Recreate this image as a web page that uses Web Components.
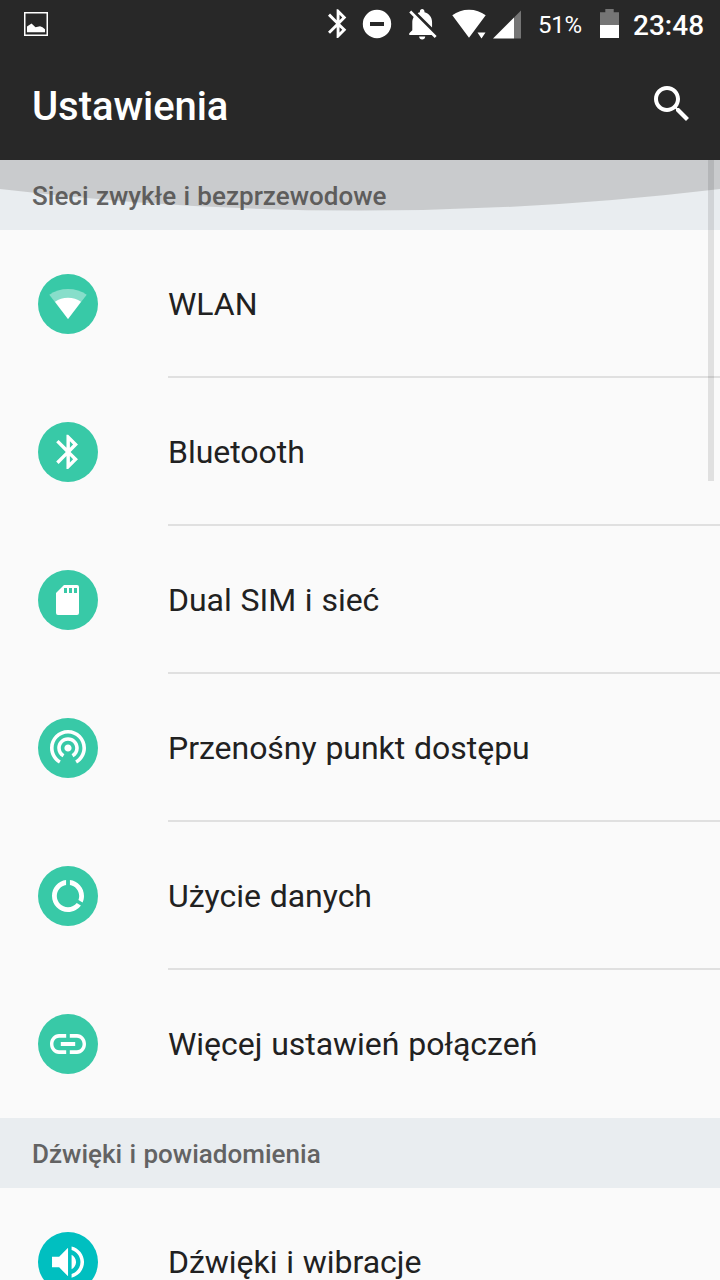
<!DOCTYPE html>
<html lang="pl">
<head>
<meta charset="utf-8">
<title>Ustawienia</title>
<style>
  html, body {
    margin: 0;
    height: 1280px;
    overflow: hidden;
    background: #fafafa;
    font-family: Roboto, "Noto Sans", sans-serif;
  }
</style>
</head>
<body>
<settings-screen>
  <status-bar slot="top" battery="51%" time="23:48"></status-bar>
  <app-bar slot="top">Ustawienia</app-bar>

  <settings-category label="Sieci zwykłe i bezprzewodowe">
    <settings-item icon="wlan">WLAN</settings-item>
    <settings-item icon="bluetooth">Bluetooth</settings-item>
    <settings-item icon="sim">Dual SIM i sieć</settings-item>
    <settings-item icon="hotspot">Przenośny punkt dostępu</settings-item>
    <settings-item icon="data">Użycie danych</settings-item>
    <settings-item icon="link">Więcej ustawień połączeń</settings-item>
  </settings-category>
  <settings-category label="Dźwięki i powiadomienia" style="--accent: #00bfc0">
    <settings-item icon="volume">Dźwięki i wibracje</settings-item>
  </settings-category>
</settings-screen>

<script>
const BLUETOOTH = 'M17.71 7.71L12 2h-1v7.59L6.41 5 5 6.41 10.59 12 5 17.59 6.41 19 11 14.41V22h1l5.71-5.71-4.3-4.29 4.3-4.29zM13 5.83l1.88 1.88L13 9.59V5.83zm1.88 10.46L13 18.17v-3.76l1.88 1.88z';

// Glyphs for the 60x60 round badges
const ICONS = {
  wlan: `
    <path d="M30 45L11.3 20.8C16.5 17 23 15 30 15s13.500 2 18.700 5.800z" opacity=".4"/>
    <path d="M30 45L17 27.800C20.700 25.100 25.200 23.700 30 23.700s9.300 1.400 13 4.100z"/>`,
  bluetooth: `<path transform="translate(9.600 9.300) scale(1.715)" d="${BLUETOOTH}"/>`,
  sim: `<path fill-rule="evenodd" d="M26 15h13a2 2 0 0 1 2 2v26a2 2 0 0 1-2 2H20a2 2 0 0 1-2-2V23zM26 18v5h3v-5zM31 18v5h3v-5zM36 18v5h3v-5z"/>`,
  hotspot: `<path transform="translate(8.4 6.6) scale(1.8)" d="M12 11c-1.100 0-2 .9-2 2s.9 2 2 2 2-.9 2-2-.9-2-2-2zm6 2c0-3.310-2.690-6-6-6s-6 2.690-6 6c0 2.220 1.210 4.150 3 5.190l1-1.740c-1.190-.7-2-1.970-2-3.450 0-2.210 1.790-4 4-4s4 1.790 4 4c0 1.480-.81 2.750-2 3.450l1 1.740c1.790-1.040 3-2.970 3-5.190zM12 3C6.480 3 2 7.480 2 13c0 3.700 2.010 6.920 4.990 8.650l1-1.730C5.610 18.530 4 15.960 4 13c0-4.420 3.580-8 8-8s8 3.580 8 8c0 2.960-1.610 5.530-4 6.920l1 1.730c2.990-1.730 5-4.950 5-8.650 0-5.520-4.480-10-10-10z"/>`,
  data: `<path transform="translate(10.800 10.800) scale(1.6)" d="M13.200 2.050v3.030c3.190.49 5.800 3.390 5.800 6.920 0 .9-.18 1.750-.48 2.540l2.600 1.530c.56-1.240.88-2.620.88-4.070 0-5.180-3.950-9.450-8.800-9.950zM12 19c-3.870 0-7-3.130-7-7 0-3.530 2.610-6.430 5.800-6.920V2.050c-4.860.5-8.800 4.760-8.800 9.950 0 5.520 4.470 10 9.990 10 3.310 0 6.240-1.610 8.060-4.090l-2.600-1.530C16.170 17.980 14.210 19 12 19z"/>`,
  link: `<path transform="translate(8.4 6) scale(1.8 2)" d="M3.900 12c0-1.710 1.390-3.100 3.100-3.100h4V7H7c-2.760 0-5 2.240-5 5s2.240 5 5 5h4v-1.900H7c-1.710 0-3.100-1.390-3.100-3.100zM8 13h8v-2H8v2zm9-6h-4v1.900h4c1.710 0 3.100 1.390 3.100 3.100s-1.390 3.100-3.100 3.100h-4V17h4c2.760 0 5-2.240 5-5s-2.240-5-5-5z"/>`,
  volume: `<path transform="translate(8.700 8.700) scale(1.778)" d="M3 9v6h4l5 5V4L7 9H3zm13.500 3c0-1.770-1.020-3.290-2.500-4.030v8.050c1.480-.73 2.500-2.250 2.500-4.020zM14 3.230v2.060c2.890.86 5 3.540 5 6.710s-2.110 5.850-5 6.710v2.060c4.010-.91 7-4.490 7-8.770s-2.990-7.860-7-8.770z"/>`
};

class StatusBar extends HTMLElement {
  connectedCallback() {
    if (this.shadowRoot) return;
    this.attachShadow({ mode: 'open' }).innerHTML = `
    <style>
      :host {
        display: flex;
        box-sizing: border-box;
        height: 48px;
        padding: 0 16px 0 24px;
        background: #282828;
        color: #fff;
      }
      svg {
        flex: none;
        height: 48px;
        fill: #fff;
      }
      .system {
        display: flex;
        margin-left: auto;
      }
      .dim {
        fill: #757575;
      }
      span {
        flex: none;
        white-space: nowrap;
        line-height: 50px;
      }
      .battery {
        width: 62px;
        margin-left: 17px;
        font-size: 24px;
        letter-spacing: -.3px;
      }
      .time {
        width: 71px;
        margin-left: 14px;
        font-size: 28px;
        font-weight: 500;
        line-height: 52px;
      }
    </style>

    <svg width="24" viewBox="0 0 24 48">
      <rect x=".75" y="12.750" width="22.500" height="22.500" fill="none" stroke="#fff" stroke-width="1.500"/>
      <path d="M3 32.300V26.500l4.500-3 4 3.700 4.500-1 2.500 1 2.500 2v3.100z"/>
    </svg>
    <div class="system">
      <svg width="20" viewBox="0 0 20 48"><path transform="translate(-6.200 6.400) scale(1.44)" d="${BLUETOOTH}"/></svg>
      <svg width="30" viewBox="0 0 30 48" style="margin-left: 15px">
        <path fill-rule="evenodd" d="M15 9.800a14.200 14.200 0 1 0 0 28.400 14.200 14.200 0 1 0 0-28.400zM8 22v4h14v-4z"/>
      </svg>
      <svg width="30" viewBox="0 0 30 48" style="margin-left: 16px">
        <path transform="translate(-3.300 6) scale(1.52)" d="M11.500 22c1.100 0 2-.9 2-2h-4c0 1.100.9 2 2 2zM18 10.500c0-3.070-2.130-5.640-5-6.320V3.500c0-.83-.67-1.500-1.500-1.500S10 2.670 10 3.500v.68c-.51.12-.99.32-1.450.56L18 14.180V10.500zm-.27 8.500l2 2L21 19.730 4.270 3 3 4.270l2.920 2.920C5.340 8.160 5 9.290 5 10.500V16l-2 2v1h14.730z"/>
      </svg>
      <svg width="34" viewBox="0 0 34 48" style="margin-left: 14px">
        <path d="M17 37.700L.3 15.300C5 11.800 10.700 9.800 17 9.800s12 2 16.700 5.500zM25.500 32.500h8l-4 6z"/>
      </svg>
      <svg width="28" viewBox="0 0 28 48" style="margin-left: 7px">
        <path class="dim" d="M21 17.500l7-7v28h-7z"/>
        <path d="M0 38.500l21-21v21z"/>
      </svg>
      <span class="battery">${this.getAttribute('battery')}</span>
      <svg width="19" viewBox="0 0 19 48">
        <path class="dim" d="M0 12.300h5.300V9h8.400v3.300H19V25H0z"/>
        <path d="M0 25h19v13H0z"/>
      </svg>
      <span class="time">${this.getAttribute('time')}</span>
    </div>
`;
  }
}

class AppBar extends HTMLElement {
  connectedCallback() {
    if (this.shadowRoot) return;
    this.attachShadow({ mode: 'open' }).innerHTML = `
    <style>
      :host {
        display: flex;
        justify-content: space-between;
        align-items: center;
        box-sizing: border-box;
        height: 112px;
        padding: 0 24px 0 32px;
        background: #282828;
        color: #fff;
        font-size: 40px;
        font-weight: 500;
        line-height: 48px;
        letter-spacing: -.06px;
      }
      h1 {
        margin: 6px 0 0;
        font: inherit;
      }
      svg {
        fill: #fff;
      }
    </style>

    <h1><slot></slot></h1>
    <svg width="48" height="48" viewBox="0 0 24 24">
      <path d="M15.500 14h-.79l-.28-.27C15.410 12.590 16 11.110 16 9.500 16 5.910 13.090 3 9.500 3S3 5.910 3 9.500 5.910 16 9.500 16c1.610 0 3.090-.59 4.230-1.570l.27.28v.79l5 4.990L20.490 19l-4.990-5zm-6 0C7.010 14 5 11.990 5 9.500S7.010 5 9.500 5 14 7.010 14 9.500 11.990 14 9.500 14z"/>
    </svg>
`;
  }
}

class SettingsCategory extends HTMLElement {
  connectedCallback() {
    if (this.shadowRoot) return;
    this.attachShadow({ mode: 'open' }).innerHTML = `
    <style>
      :host {
        display: block;
      }
      h2 {
        margin: 0;
        height: 70px;
        padding-left: 32px;
        background: #e9edf0;
        color: #636363;
        font-size: 26px;
        font-weight: 500;
        line-height: 72px;
        letter-spacing: .02px;
        word-spacing: .8px;
      }
      ::slotted(:last-of-type) {
        --divider: transparent;
      }
    </style>

    <h2>${this.getAttribute('label')}</h2>
    <slot></slot>
`;
  }
}

class SettingsItem extends HTMLElement {
  connectedCallback() {
    if (this.shadowRoot) return;
    this.attachShadow({ mode: 'open' }).innerHTML = `
    <style>
      :host {
        display: flex;
        align-items: center;
        height: 148px;
        padding-left: 38px;
        color: #212121;
        font-size: 32px;
        letter-spacing: -.03px;
        word-spacing: .9px;
      }
      svg {
        flex: none;
        margin-right: 70px;
        border-radius: 50%;
        background: var(--accent, #38c9a7);
        fill: #fff;
      }
      div {
        flex: 1;
        box-sizing: border-box;
        height: 148px;
        border-bottom: 2px solid var(--divider, #e0e0e0);
        line-height: 148px;
      }
    </style>

    <svg width="60" height="60" viewBox="0 0 60 60">${ICONS[this.getAttribute('icon')]}</svg>
    <div><slot></slot></div>
`;
  }
}

class SettingsScreen extends HTMLElement {
  connectedCallback() {
    if (this.shadowRoot) return;
    this.attachShadow({ mode: 'open' }).innerHTML = `
    <style>
      :host {
        display: flex;
        flex-direction: column;
        width: 720px;
        height: 1280px;
        overflow: hidden;
      }
      main {
        position: relative;
        flex: 1;
        min-height: 0;
        overflow: hidden;
      }
      /* Overscroll glow */
      .glow {
        position: absolute;
        top: 0;
        left: 0;
        fill: rgba(75, 72, 64, .2);
      }
      .scrollbar {
        position: absolute;
        top: 0;
        right: 6px;
        width: 6px;
        height: 321px;
        background: rgba(0, 0, 0, .1);
      }
    </style>

    <slot name="top"></slot>
    <main>
      <slot></slot>
      <svg class="glow" width="720" height="52" viewBox="0 0 720 52"><path d="M0 0h720v29A3025 3025 0 0 1 0 29z"/></svg>
      <div class="scrollbar"></div>
    </main>
`;
  }
}

customElements.define('status-bar', StatusBar);
customElements.define('app-bar', AppBar);
customElements.define('settings-category', SettingsCategory);
customElements.define('settings-item', SettingsItem);
customElements.define('settings-screen', SettingsScreen);
</script>
</body>
</html>
